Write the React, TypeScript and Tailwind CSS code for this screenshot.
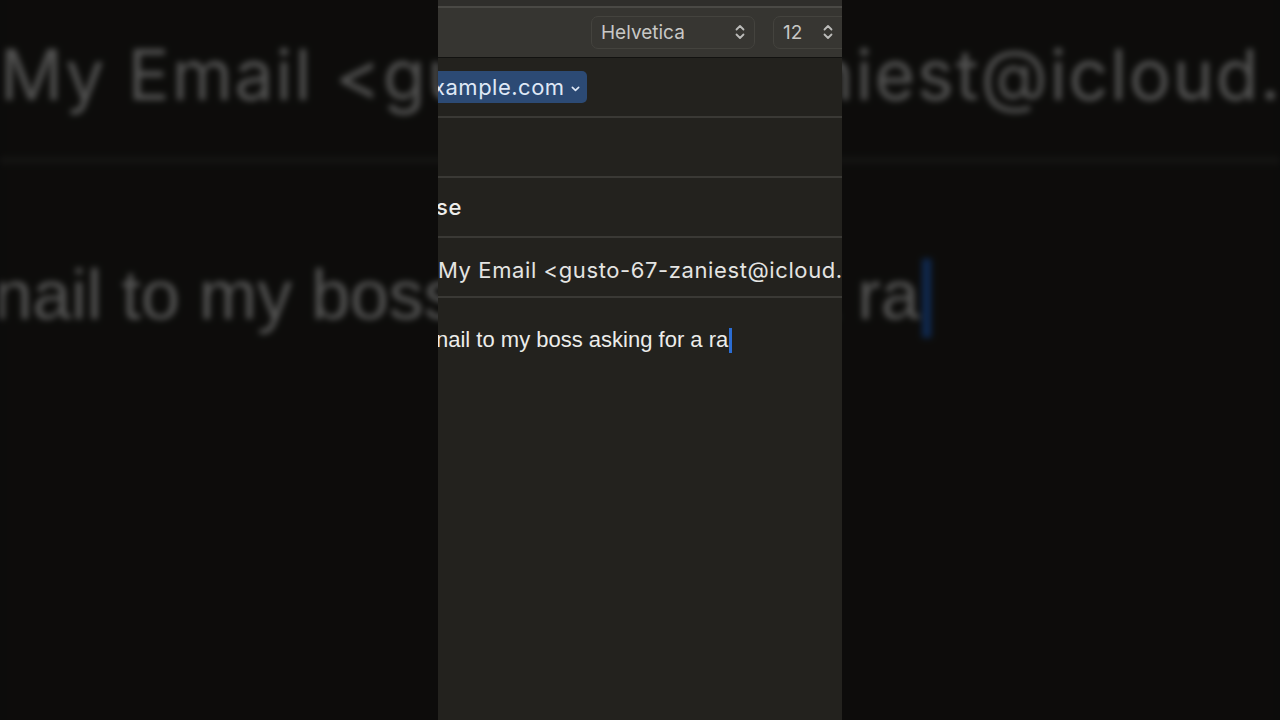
import React from 'react';

const HEADER_FONT = { fontFamily: 'Inter, "Noto Sans", sans-serif' };
const BODY_FONT = { fontFamily: '"Liberation Sans", Arial, sans-serif' };

function UpDown({ className = '' }: { className?: string }) {
  return (
    <svg viewBox="0 0 10 16" className={className} fill="none" stroke="currentColor" strokeWidth={1.8} strokeLinecap="round" strokeLinejoin="round" aria-hidden>
      <polyline points="1.5,5.5 5,2 8.5,5.5" />
      <polyline points="1.5,10.5 5,14 8.5,10.5" />
    </svg>
  );
}

function SelectBox({ label, width, iconPad }: { label: string; width: string; iconPad: string }) {
  return (
    <div
      className={`flex h-[33px] shrink-0 items-center justify-between rounded-[7px] border border-[#44433e] bg-[#373632] pl-[9px] ${iconPad} ${width}`}
    >
      <span className="text-[19px] leading-none text-[#c8c8c6]" style={HEADER_FONT}>
        {label}
      </span>
      <UpDown className="h-[16px] w-[10px] text-[#bcbcba]" />
    </div>
  );
}

function ComposePanel() {
  return (
    <div className="flex h-[720px] w-[404px] shrink-0 flex-col overflow-hidden bg-[#23221e]">
      {/* toolbar */}
      <div className="h-[6px] bg-[#2f2e2b]" />
      <div className="h-[2px] bg-[#4a4945]" />
      <div className="flex h-[49px] items-center gap-[18px] bg-[#363531] pl-[153px] pb-[1px]">
        <SelectBox label="Helvetica" width="w-[164px]" iconPad="pr-[9px]" />
        <SelectBox label="12" width="w-[80px]" iconPad="pr-[19px]" />
      </div>
      <div className="h-[1px] bg-[#121210]" />

      {/* From */}
      <div className="flex h-[60px] items-center border-b-2 border-[#3a3935]">
        <div className="flex h-[32px] items-center gap-[6px] rounded-r-[5px] bg-[#2c4a74] pr-[7px]">
          <span className="-ml-[5px] text-[22px] leading-none tracking-[0.5px] text-[#dfe8f6]" style={HEADER_FONT}>
            xample.com
          </span>
          <svg viewBox="0 0 10 6" className="mt-[3px] h-[6px] w-[9px] text-[#dfe8f6]" fill="none" stroke="currentColor" strokeWidth={1.8} strokeLinecap="round" strokeLinejoin="round" aria-hidden>
            <polyline points="1.5,1.2 5,4.6 8.5,1.2" />
          </svg>
        </div>
      </div>

      {/* To (empty) */}
      <div className="h-[60px] border-b-2 border-[#3a3935]" />

      {/* Subject */}
      <div className="flex h-[60px] items-center border-b-2 border-[#3a3935]">
        <span className="-ml-[2px] text-[22px] font-medium leading-none tracking-[0.6px] text-[#ededeb]" style={HEADER_FONT}>
          se
        </span>
      </div>

      {/* Sender */}
      <div className="flex h-[60px] items-center border-b-2 border-[#3a3935] pt-[6px]">
        <span className="whitespace-nowrap text-[22px] leading-none tracking-[0.6px] text-[#e4e4e2]" style={HEADER_FONT}>
          My Email &lt;gusto-67-zaniest@icloud.com&gt;
        </span>
      </div>

      {/* Body */}
      <div className="flex items-center pt-[29px]">
        <span className="-ml-[2px] whitespace-nowrap text-[22px] leading-[26px] text-[#ececea]" style={BODY_FONT}>
          nail to my boss asking for a ra
        </span>
        <span className="ml-[1px] h-[25px] w-[3px] bg-[#2b6dd3]" />
      </div>
    </div>
  );
}

export default function App() {
  return (
    <div className="relative h-[720px] w-[1280px] overflow-hidden bg-[#0b0b0b]">
      {/* blurred, zoomed copy of the video behind the frame */}
      <div className="absolute inset-0 flex items-center justify-center blur-[3px] brightness-[0.36]">
        <div className="scale-[3.168]">
          <ComposePanel />
        </div>
      </div>

      <div className="relative flex h-full items-center justify-center">
        <ComposePanel />
      </div>
    </div>
  );
}
